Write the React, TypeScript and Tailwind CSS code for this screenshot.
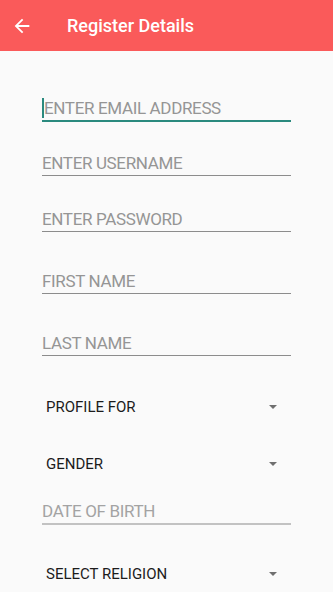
import React from 'react';

const Arrow = () => (
  <svg width="8" height="4" viewBox="0 0 8 4" className="fill-[#6f6f6f]">
    <path d="M0 0h8L4 4z" />
  </svg>
);

const TextField = ({ label, mt, focused }: { label: string; mt: string; focused?: boolean }) => (
  <div className={`${mt} pb-[2px] ${focused ? 'border-b-2 border-[#2a8a7e]' : 'border-b border-[#8c8c8c]'}`}>
    <div className="flex items-center h-[20px]">
      {focused && <span className="w-[2px] h-[20px] bg-[#2a8a7e]" />}
      <span className="text-[17px] leading-[20px] tracking-[-0.35px] text-[#959595] whitespace-nowrap">{label}</span>
    </div>
  </div>
);

const Spinner = ({ label, mt }: { label: string; mt: string }) => (
  <div className={`${mt} flex items-center justify-between h-[20px] pl-[4px] pr-[14px]`}>
    <span className="text-[15px] leading-[20px] text-[#1c1c1c]">{label}</span>
    <Arrow />
  </div>
);

export default function App() {
  return (
    <div className="w-[333px] h-[592px] overflow-hidden bg-[#fafafa]" style={{ fontFamily: 'Roboto, "Noto Sans", sans-serif' }}>
      <header className="h-[51px] bg-[#fa5a5a] flex items-center">
        <svg width="22" height="22" viewBox="0 0 24 24" className="ml-[11px] fill-white">
          <path d="M20 11H7.83l5.59-5.59L12 4l-8 8 8 8 1.41-1.41L7.83 13H20v-2z" />
        </svg>
        <span className="ml-[34px] text-white text-[18px] font-medium">Register Details</span>
      </header>
      <div className="ml-[42px] w-[249px]">
        <TextField label="ENTER EMAIL ADDRESS" mt="mt-[47px]" focused />
        <TextField label="ENTER USERNAME" mt="mt-[31px]" />
        <TextField label="ENTER PASSWORD" mt="mt-[33px]" />
        <TextField label="FIRST NAME" mt="mt-[39px]" />
        <TextField label="LAST NAME" mt="mt-[39px]" />
        <Spinner label="PROFILE FOR" mt="mt-[41px]" />
        <Spinner label="GENDER" mt="mt-[37px]" />
        <div className="mt-[27px] pb-[2px] border-b-2 border-[#c2c2c2]">
          <div className="h-[20px] text-[17px] leading-[20px] tracking-[-0.35px] text-[#a3a3a3]">DATE OF BIRTH</div>
        </div>
        <Spinner label="SELECT RELIGION" mt="mt-[39px]" />
      </div>
    </div>
  );
}
